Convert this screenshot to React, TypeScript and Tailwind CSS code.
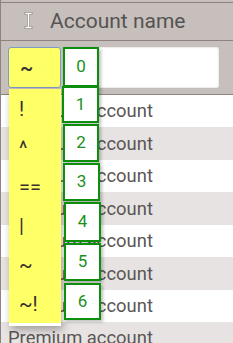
import React from 'react'

const ops = ['!', '^', '==', '|', '~', '~!']

// index badges drawn over the filter menu
const badges = [
  { n: 0, top: 47, left: 62, h: 40, w: 36 },
  { n: 1, top: 86, left: 61, h: 37, w: 37 },
  { n: 2, top: 124, left: 62, h: 38, w: 36 },
  { n: 3, top: 163, left: 62, h: 38, w: 37 },
  { n: 4, top: 202, left: 63, h: 40, w: 37 },
  { n: 5, top: 243, left: 63, h: 38, w: 37 },
  { n: 6, top: 283, left: 63, h: 37, w: 37 },
]

function CursorIcon() {
  const d = 'M1.5 1.5h2.5l0.5 0.8 0.5-0.8h2.5M4.5 2.3v12.4M1.5 15.5h2.5l0.5-0.8 0.5 0.8h2.5'
  return (
    <svg width="9" height="17" viewBox="0 0 9 17" className="absolute left-[23px] top-[9px]">
      <path d={d} fill="none" stroke="#a49c99" strokeWidth="2.4" strokeLinecap="square" />
      <path d={d} fill="none" stroke="#ffffff" strokeWidth="1.1" />
    </svg>
  )
}

export default function App() {
  const rows = Array.from({ length: 8 })

  return (
    <div className="relative w-[233px] h-[343px] overflow-hidden bg-white border-l border-[#8d8481] font-['Roboto',sans-serif]">
      <div className="h-[2px] bg-[#c6bfbb]" />
      <div className="relative h-[39px] bg-[#c6bfbb] border-y border-[#8d8481] flex items-center pl-[49px]">
        <CursorIcon />
        <span className="text-[21px] text-[#565353] leading-none">Account name</span>
      </div>

      <div className="h-[54px] bg-[#c6bfbb] border-b border-[#8d8481] flex items-start pt-[6px] pl-[7px] pr-[14px] gap-[2px]">
        <div className="w-[53px] h-[41px] bg-[#ffff66] border border-[#7d9cc4] rounded-[3px] flex items-center pl-[11px] text-[20px] text-[#333] font-medium">
          ~
        </div>
        <div className="flex-1 h-[41px] bg-white rounded-[2px] shadow-[inset_0_0_2px_rgba(0,0,0,0.25)]" />
      </div>

      {rows.map((_, i) => (
        <div
          key={i}
          className={`h-[32.43px] flex items-center pl-[7px] text-[18.4px] text-[#5a5656] ${i % 2 === 1 ? 'bg-[#e7e3e2]' : 'bg-white'}`}
        >
          Premium account
        </div>
      ))}

      <div className="absolute top-[89px] left-[8px] w-[52px] bg-white pb-[3px] shadow-[2px_4px_8px_rgba(0,0,0,0.3)]">
        {ops.map((op) => (
          <div
            key={op}
            className="h-[39px] bg-[#ffff66] flex items-center pl-[10px] text-[20px] text-[#3a3030]"
          >
            {op}
          </div>
        ))}
      </div>

      {badges.map((b) => (
        <div
          key={b.n}
          className="absolute bg-white border-2 border-[#0c8f0c] flex items-center justify-center text-[17px] text-[#1a9020] shadow-[2px_2px_3px_rgba(0,0,0,0.25)]"
          style={{ top: b.top, left: b.left, height: b.h, width: b.w }}
        >
          {b.n}
        </div>
      ))}
    </div>
  )
}
